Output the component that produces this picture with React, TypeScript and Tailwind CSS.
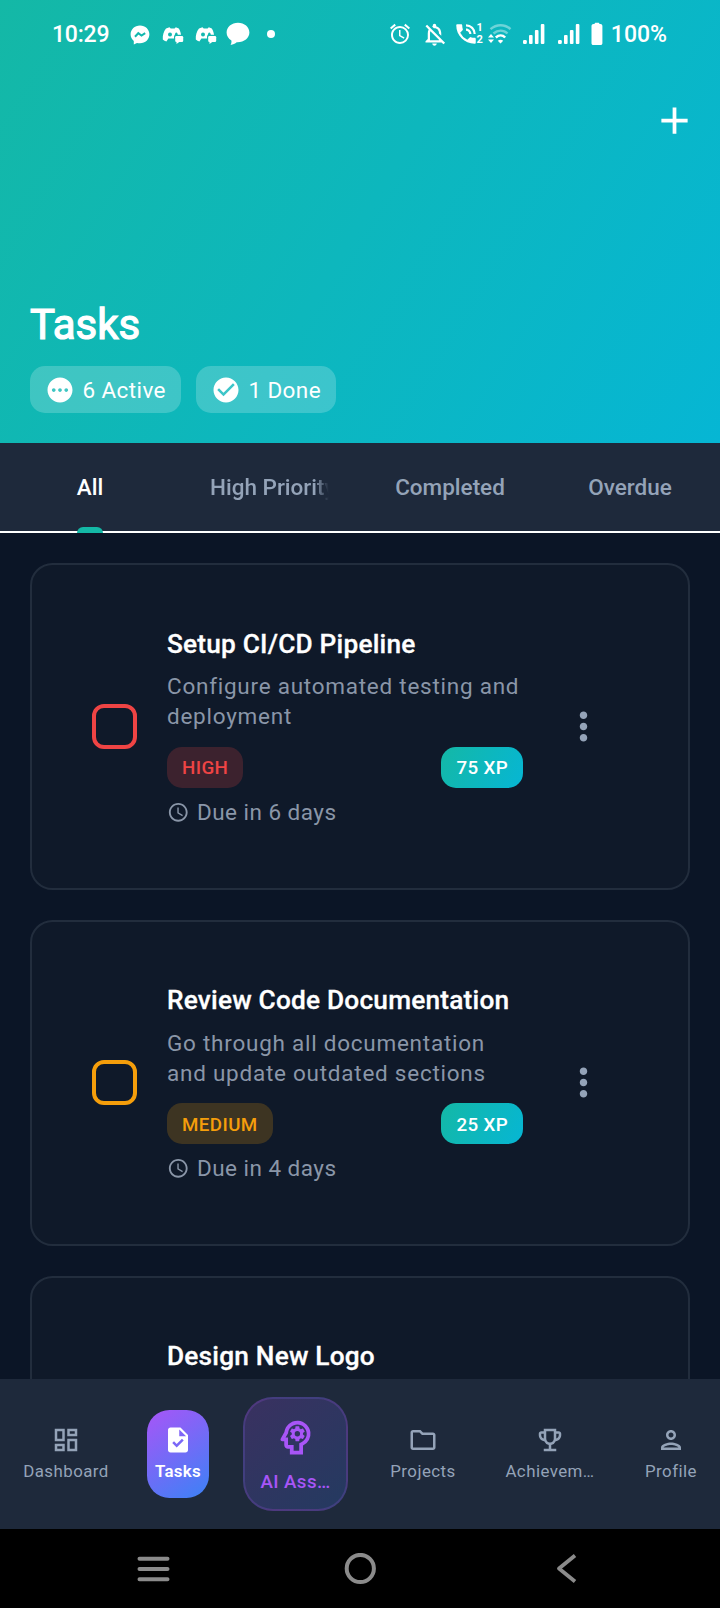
import type { ReactNode } from "react";
import {
  MdAccessTime,
  MdAdd,
  MdAlarm,
  MdCheckCircle,
  MdMoreVert,
  MdOutlineDashboard,
  MdOutlineEmojiEvents,
  MdOutlineFolder,
  MdOutlineNotificationsOff,
  MdOutlinePerson,
  MdOutlinePsychology,
  MdPending,
  MdPhoneInTalk,
  MdTask,
} from "react-icons/md";

function MessengerIcon() {
  return (
    <svg width="20" height="20" viewBox="0 0 20 20" fill="none">
      <path d="M10 .4C4.600.4.600 4.300.600 9.300c0 2.700 1.200 5 3.200 6.600v3.600l3.200-1.600c1 .3 2 .4 3 .4 5.400 0 9.400-4 9.400-9S15.400.4 10 .4Z" fill="#fff" />
      <path d="M5 11.800 8.300 8.200l3.200 2.400 3.700-2.500" stroke="#12b8ae" strokeWidth="2" />
    </svg>
  );
}

function GameChatIcon() {
  return (
    <svg width="22" height="20" viewBox="0 0 22 20">
      <path d="M7.500 2.200 4 3.400C1.700 6.200.500 10 .800 14.500c1.100 1 2.200 1.600 3.600 1.900l2-3h6V11.400h6.800c-.2-3-.9-6-2.400-8L13.800 2.200l-1.200 1.200H8.700Z" fill="#fff" />
      <ellipse cx="8" cy="9.500" rx="2" ry="2.100" fill="#12b8b0" />
      <path d="M14.300 7.600c1 .3 1.500 1.200 1.500 2.600h-3c0-1.400.5-2.300 1.500-2.600Z" fill="#12b8b0" />
      <rect x="12" y="9.800" width="10" height="9" rx="1.500" fill="#12b8b0" />
      <rect x="13.200" y="11" width="8" height="6" rx="1.300" fill="#fff" />
      <path d="M14.500 16.500h3.500l-3.500 2.500Z" fill="#fff" />
    </svg>
  );
}

function BubbleIcon() {
  return (
    <svg width="24" height="24" viewBox="0 0 24 24" fill="#fff">
      <path d="M12 .8C5.600.8.600 5 .600 10.600c0 3.300 1.800 6.200 4.800 8 .2 1.700 0 3-.9 4.500 2.600-.5 4.700-1.500 6.200-2.800 7 .4 12.700-4 12.700-9.700C23.400 5 18.400.8 12 .8Z" />
    </svg>
  );
}

function WifiIcon() {
  return (
    <svg width="26" height="22" viewBox="0 0 26 22" fill="none" stroke="#fff">
      <path d="M3.500 6.200c5.800-5.300 14.500-5.300 20 0" strokeWidth="2.400" opacity=".4" />
      <path d="M6.500 10.500c4.200-3.900 10.200-3.900 14 0" strokeWidth="2.400" opacity=".4" />
      <path d="M8.800 14.500c3-2.700 6.800-2.700 9.400 0" strokeWidth="2.500" />
      <path d="m10.800 17.800c1.600-1.400 4-1.400 5.400 0L13.500 20.500Z" fill="#fff" stroke="none" />
      <path d="m4 11 3 3.500H1Zm0 9 3-3.500H1Z" fill="#fff" stroke="none" />
    </svg>
  );
}

function SignalIcon() {
  return (
    <svg width="23" height="22" viewBox="0 0 23 22" fill="#fff">
      <rect x="1" y="17" width="3.800" height="4" rx="1.200" />
      <rect x="7" y="12" width="3.600" height="9" rx="1" />
      <rect x="12.900" y="7" width="3.600" height="14" rx="1" />
      <rect x="18.800" y="1" width="3.600" height="20" rx="1" />
    </svg>
  );
}

function BatteryIcon() {
  return (
    <svg width="12" height="24" viewBox="0 0 12 24" fill="#fff">
      <path d="M3.500 2c0-.7.5-1.300 1.200-1.300h2.600c.7 0 1.200.6 1.200 1.300h1c1.100 0 1.900.8 1.900 1.900v17.300c0 1-.8 1.800-1.800 1.800H2.300c-1 0-1.800-.8-1.800-1.800V3.900C.5 2.800 1.400 2 2.500 2Z" />
    </svg>
  );
}

function StatusBar() {
  return (
    <div className="flex h-[68px] items-center pr-[53px] pl-[52px] text-[23px] font-medium text-white">
      <span className="w-[78px] pt-[3px] tracking-[-0.2px]">10:29</span>
      <div className="flex items-center">
        <span className="mr-[12px] pt-px"><MessengerIcon /></span>
        <span className="mr-[11px] pt-px"><GameChatIcon /></span>
        <span className="mr-[9px] pt-px"><GameChatIcon /></span>
        <BubbleIcon />
        <span className="ml-[17px] size-2 rounded-full bg-white" />
      </div>
      <div className="ml-auto flex items-center">
        <MdAlarm className="mr-[9px] size-6" />
        <MdOutlineNotificationsOff className="mr-[7px] size-[27px]" />
        <div className="relative mr-[4px] flex w-[28px]">
          <MdPhoneInTalk className="-ml-[2px] size-[26px]" />
          <span className="absolute top-[1px] right-[0px] flex flex-col bg-[#0eb7bd] text-[11px] leading-[12px] font-bold">
            <span>1</span>
            <span>2</span>
          </span>
        </div>
        <span className="mr-[9px]"><WifiIcon /></span>
        <span className="mr-[12px]"><SignalIcon /></span>
        <span className="mr-[11px]"><SignalIcon /></span>
        <span className="mr-[8px]"><BatteryIcon /></span>
        <span className="pt-[3px]">100%</span>
      </div>
    </div>
  );
}

function StatChip({ icon, label }: { icon: ReactNode; label: string }) {
  return (
    <div className="flex h-[47px] items-center gap-[7.5px] rounded-[15px] bg-white/20 px-[15px] text-[22.5px] tracking-[0.400px] text-white">
      {icon}
      <span className="pt-[2px]">{label}</span>
    </div>
  );
}

function Header() {
  return (
    <header className="flex h-[443px] shrink-0 flex-col bg-[linear-gradient(121.6deg,#14b8a6,#06b6d4)]">
      <StatusBar />
      <div className="flex h-[104px] items-center justify-end pr-[23px]">
        <MdAdd className="size-[45px] text-white" />
      </div>
      <div className="flex flex-1 flex-col px-[30px] pt-[128px]">
        <h1 className="text-[42px] leading-[50px] font-normal text-white [-webkit-text-stroke:1.200px_#fff]">Tasks</h1>
        <div className="mt-[16px] flex gap-[15px]">
          <StatChip icon={<MdPending className="size-[30px]" />} label="6 Active" />
          <StatChip icon={<MdCheckCircle className="size-[30px]" />} label="1 Done" />
        </div>
      </div>
    </header>
  );
}

function Tabs() {
  return (
    <nav className="grid h-[90px] shrink-0 grid-cols-4 border-b-2 border-white bg-[#1e293b] text-[22.5px] font-medium text-[#94a3b8]">
      <div className="relative flex items-center justify-center pt-[2px] text-white">
        All
        <span className="absolute -bottom-[2px] left-[77px] h-[6px] w-[26px] rounded-t-[6px] bg-[#14b8a6]" />
      </div>
      <div className="flex items-center px-[30px] pt-[2px]">
        <span className="overflow-hidden whitespace-nowrap [mask-image:linear-gradient(to_right,#000_87%,transparent_99%)]">
          High Priority
        </span>
      </div>
      <div className="flex items-center justify-center pt-[2px]">Completed</div>
      <div className="flex items-center justify-center pt-[2px]">Overdue</div>
    </nav>
  );
}

type Task = {
  title: string;
  lines: string[];
  priority: string;
  box: string;
  badge: string;
  xp: string;
  due: string;
};

const tasks: Task[] = [
  {
    title: "Setup CI/CD Pipeline",
    lines: ["Configure automated testing and", "deployment"],
    priority: "HIGH",
    box: "border-[#ef4444]",
    badge: "bg-[#ef4444]/20 text-[#ef4444]",
    xp: "75 XP",
    due: "Due in 6 days",
  },
  {
    title: "Review Code Documentation",
    lines: ["Go through all documentation", "and update outdated sections"],
    priority: "MEDIUM",
    box: "border-[#f59e0b]",
    badge: "bg-[#f59e0b]/20 text-[#f59e0b]",
    xp: "25 XP",
    due: "Due in 4 days",
  },
];

const cardFrame = "shrink-0 rounded-[22.500px] border-2 border-[#222d3d] bg-[#0f1929]";
const cardTitle =
  "text-[26.25px] leading-[37px] font-medium tracking-[0.200px] text-white [-webkit-text-stroke:0.300px_#fff]";

function TaskCard({ task }: { task: Task }) {
  return (
    <article className={`flex h-[326.500px] items-center pl-[60px] ${cardFrame}`}>
      <span className={`size-[45px] shrink-0 rounded-[12px] border-4 ${task.box}`} />
      <div className="ml-[30px] w-[356px]">
        <h2 className={cardTitle}>{task.title}</h2>
        <p className="mt-[8.500px] text-[22.5px] leading-[30px] tracking-[0.75px] whitespace-nowrap text-[#8a96a8]">
          {task.lines[0]}
          <br />
          {task.lines[1]}
        </p>
        <div className="mt-[15.500px] flex items-center justify-between text-[18.75px] font-medium">
          <span className={`flex h-[41px] items-center rounded-[15px] px-[15px] pt-[2px] tracking-[0.400px] ${task.badge}`}>
            {task.priority}
          </span>
          <span className="flex h-[41px] items-center rounded-[15px] bg-[linear-gradient(117deg,#14b8a6,#06b6d4)] px-[15px] pt-[2px] tracking-[0.350px] text-white">
            {task.xp}
          </span>
        </div>
        <div className="mt-[9px] flex items-center gap-[7.500px] text-[22.5px] leading-[30px] tracking-[0.470px] text-[#8a96a8]">
          <MdAccessTime className="size-[22.500px]" />
          {task.due}
        </div>
      </div>
      <MdMoreVert className="ml-[38px] size-[45px] text-[#94a3b8]" />
    </article>
  );
}

function NavItem({ icon, label, className }: { icon: ReactNode; label: string; className: string }) {
  return (
    <div className={`flex h-[88px] shrink-0 flex-col items-center pt-[15px] text-[16.875px] leading-[24px] whitespace-nowrap ${className}`}>
      {icon}
      <span className="mt-[4px]">{label}</span>
    </div>
  );
}

function BottomNav() {
  return (
    <nav className="flex h-[150px] shrink-0 items-center bg-[#1e293b] text-[#94a3b8]">
      <NavItem
        className="ml-[16px] w-[100px] tracking-[0.450px]"
        icon={<MdOutlineDashboard className="size-[30px]" />}
        label="Dashboard"
      />
      <NavItem
        className="ml-[31px] w-[62px] rounded-[22.500px] bg-[linear-gradient(145deg,#a855f7,#3b82f6)] font-semibold tracking-[0.300px] text-white"
        icon={<MdTask className="size-[30px]" />}
        label="Tasks"
      />
      <div className="ml-[34px] flex h-[114px] w-[105px] shrink-0 flex-col items-center rounded-[30px] border-2 border-[#a855f7]/20 bg-[linear-gradient(137deg,rgba(168,85,247,0.2),rgba(59,130,246,0.2))] pt-[16px] text-[18.75px] leading-[26px] font-medium tracking-[0.400px] whitespace-nowrap text-[#a855f7]">
        <MdOutlinePsychology className="size-[45px]" />
        <span className="mt-[9px]">AI Ass…</span>
      </div>
      <NavItem
        className="ml-[25px] w-[100px] tracking-[0.450px]"
        icon={<MdOutlineFolder className="size-[30px]" />}
        label="Projects"
      />
      <NavItem
        className="ml-[22px] w-[110px] tracking-[0.450px]"
        icon={<MdOutlineEmojiEvents className="size-[30px]" />}
        label="Achievem…"
      />
      <NavItem
        className="ml-[26px] w-[80px] tracking-[0.450px]"
        icon={<MdOutlinePerson className="size-[30px]" />}
        label="Profile"
      />
    </nav>
  );
}

function SystemNav() {
  return (
    <div className="flex h-[79px] shrink-0 items-center bg-black pl-[137px] text-[#8b8b8b]">
      <svg width="33" height="28" viewBox="0 0 33 28" stroke="currentColor" strokeWidth="4" strokeLinecap="round">
        <path d="M2.500 3.800h28M2.500 14h28M2.500 24.200h28" />
      </svg>
      <svg className="ml-[174px]" width="32" height="32" viewBox="0 0 32 32" fill="none" stroke="currentColor" strokeWidth="4">
        <circle cx="16.300" cy="15.500" r="13.600" />
      </svg>
      <svg className="ml-[179px]" width="22" height="30" viewBox="0 0 22 30" fill="none" stroke="currentColor" strokeWidth="3.800">
        <path d="M20 1.500 4 14.500 20 27.500" strokeLinejoin="round" />
      </svg>
    </div>
  );
}

export default function App() {
  return (
    <div className="flex h-[1608px] w-[720px] flex-col overflow-hidden bg-[#0b1526] font-[Roboto,sans-serif]">
      <Header />
      <Tabs />
      <main className="flex min-h-0 flex-1 flex-col gap-[30px] overflow-hidden bg-[#0b1526] px-[30px] pt-[30px]">
        {tasks.map((task) => (
          <TaskCard key={task.title} task={task} />
        ))}
        <article className={`h-[326px] pt-[60px] pl-[135px] ${cardFrame}`}>
          <h2 className={cardTitle}>Design New Logo</h2>
        </article>
      </main>
      <BottomNav />
      <SystemNav />
    </div>
  );
}
